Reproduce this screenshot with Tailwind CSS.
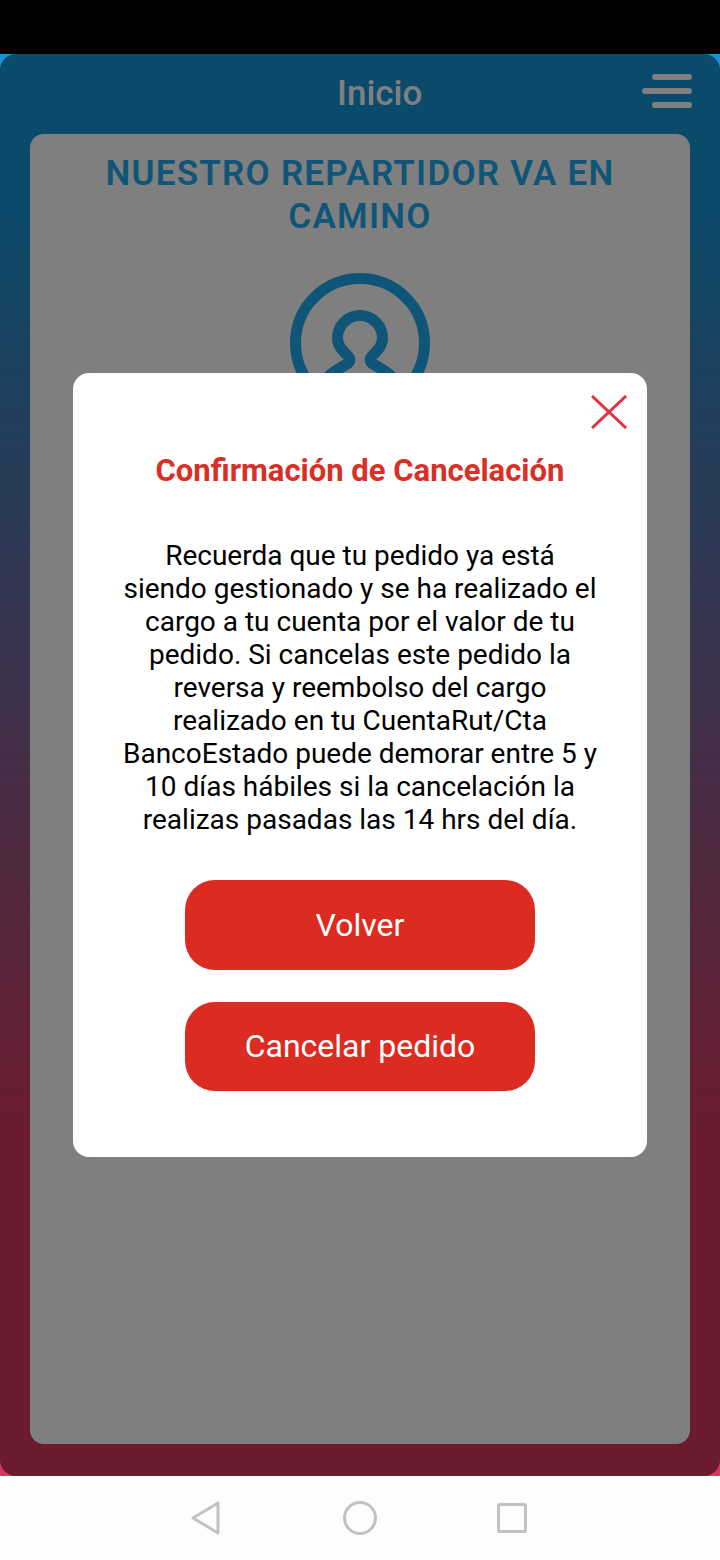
<!DOCTYPE html>
<html lang="es">
<head>
  <meta charset="UTF-8" />
  <meta name="viewport" content="width=device-width, initial-scale=1" />
  <title>Inicio</title>
  <script src="https://cdn.jsdelivr.net/npm/@tailwindcss/browser@4"></script>
</head>
<body class="bg-white font-['Roboto',sans-serif]">
  <div class="w-[720px] h-[1560px] flex flex-col overflow-hidden">
    <div class="h-[54px] bg-black"></div>

    <!-- main screen -->
    <div class="relative h-[1422px] bg-[linear-gradient(180deg,#1494d6_0%,#1494d6_10%,#d6365c_76%,#d6365c_100%)]">
      <div class="h-[80px] flex items-center justify-between pl-[337px] pr-[28px]">
        <span class="text-white text-[35px] font-medium">Inicio</span>
        <div class="w-[50px] mb-[6px] flex flex-col items-end gap-[8px]">
          <div class="w-[40px] h-[6px] rounded-full bg-white"></div>
          <div class="w-[50px] h-[6px] rounded-full bg-white"></div>
          <div class="w-[40px] h-[6px] rounded-full bg-white"></div>
        </div>
      </div>
      <div class="mx-[30px] h-[1310px] bg-white rounded-[14px] flex flex-col items-center pt-[18px] overflow-hidden">
        <h1 class="text-center text-[#1eaaee] text-[35px] leading-[43px] font-semibold tracking-[1.25px] px-[60px]">NUESTRO REPARTIDOR VA EN CAMINO</h1>
        <svg class="mt-[35px]" width="140" height="140" viewBox="0 0 140 140" fill="none" stroke="#1eaaee" stroke-width="11" stroke-linecap="round">
          <circle cx="70" cy="70" r="64.5" />
          <path d="M34 108C40 100 50 95 57 91Q62 88 58 83C51 76 47.5 72 47.5 65A22.5 22.5 0 0 1 92.5 65C92.5 72 89 76 82 83Q78 88 83 91C90 95 100 100 106 108" />
        </svg>
      </div>

      <!-- backdrop -->
      <div class="absolute inset-0 rounded-[16px] bg-black/50"></div>

      <!-- modal -->
      <div class="absolute left-[73px] top-[319px] w-[574px] h-[784px] bg-white rounded-[16px] flex flex-col items-center">
        <svg class="absolute right-[20px] top-[22px]" width="36" height="34" viewBox="0 0 36 34" stroke="#e2313f" stroke-width="3">
          <path d="M1 1l34 32M35 1L1 33" />
        </svg>
        <h2 class="mt-[78px] text-[#d92f27] text-[31px] leading-[40px] font-bold">Confirmación de Cancelación</h2>
        <p class="mt-[48px] w-[476px] text-center text-black text-[28px] leading-[33px]">Recuerda que tu pedido ya está siendo gestionado y se ha realizado el cargo a tu cuenta por el valor de tu pedido. Si cancelas este pedido la reversa y reembolso del cargo realizado en tu CuentaRut/Cta BancoEstado puede demorar entre 5 y 10 días hábiles si la cancelación la realizas pasadas las 14 hrs del día.</p>
        <button class="mt-[44px] w-[350px] h-[90px] rounded-[30px] bg-[#dc2b20] text-white text-[32px]">Volver</button>
        <button class="mt-[32px] w-[350px] h-[89px] pb-[2px] rounded-[30px] bg-[#dc2b20] text-white text-[32px]">Cancelar pedido</button>
      </div>
    </div>

    <!-- android nav -->
    <div class="h-[84px] bg-[#fdfdfd] flex items-center pl-[190px]">
      <svg width="32" height="34" viewBox="0 0 32 34" fill="none" stroke="#c2c2c2" stroke-width="3" stroke-linejoin="round">
        <path d="M28 2L3 17l25 15z" />
      </svg>
      <svg class="ml-[121px]" width="34" height="34" viewBox="0 0 34 34" fill="none" stroke="#c2c2c2" stroke-width="3">
        <circle cx="17" cy="17" r="15.5" />
      </svg>
      <svg class="ml-[119px]" width="32" height="30" viewBox="0 0 32 30" fill="none" stroke="#c2c2c2" stroke-width="3" stroke-linejoin="round">
        <rect x="2.5" y="1.5" width="27" height="27" rx="1" />
      </svg>
    </div>
  </div>
</body>
</html>
